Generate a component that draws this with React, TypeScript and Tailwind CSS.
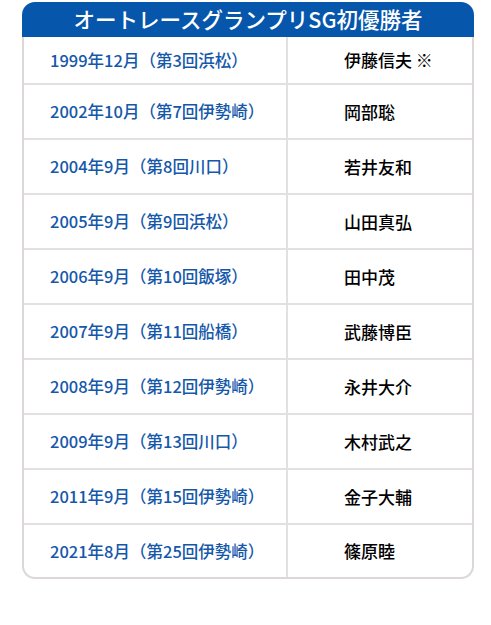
import React from 'react'

const rows = [
  { date: '1999年12月（第3回浜松）', name: '伊藤信夫 ※' },
  { date: '2002年10月（第7回伊勢崎）', name: '岡部聡' },
  { date: '2004年9月（第8回川口）', name: '若井友和' },
  { date: '2005年9月（第9回浜松）', name: '山田真弘' },
  { date: '2006年9月（第10回飯塚）', name: '田中茂' },
  { date: '2007年9月（第11回船橋）', name: '武藤博臣' },
  { date: '2008年9月（第12回伊勢崎）', name: '永井大介' },
  { date: '2009年9月（第13回川口）', name: '木村武之' },
  { date: '2011年9月（第15回伊勢崎）', name: '金子大輔' },
  { date: '2021年8月（第25回伊勢崎）', name: '篠原睦' },
]

const App: React.FC = () => {
  return (
    <div
      className="w-[491px] h-[625px] bg-white pt-[2px]"
      style={{ fontFamily: '"Noto Sans CJK JP", "Noto Sans", sans-serif' }}
    >
      <div className="ml-[22px] w-[452px]">
        <div className="h-[35px] bg-[#0656ab] rounded-t-[13px] flex items-center justify-center text-white text-[21.5px] font-medium">
          オートレースグランプリSG初優勝者
        </div>
        <div className="border-x-2 border-b-2 border-[#dcd8d8] rounded-b-[13px] overflow-hidden">
          {rows.map((row, i) => (
            <div
              key={row.date}
              className={`flex ${
                i === 0 ? 'h-[48px]' : i === rows.length - 1 ? 'h-[52px]' : 'h-[55px]'
              } ${i < rows.length - 1 ? 'border-b-2 border-[#e2e0e0]' : ''}`}
            >
              <div className="w-[262px] pl-[26px] flex items-center text-[16.5px] font-medium text-[#1558aa]">
                {row.date}
              </div>
              <div className="w-[2px] bg-[#e2e0e0]" />
              <div className="flex-1 pl-[56px] flex items-center text-[17px] font-medium text-black">
                {row.name}
              </div>
            </div>
          ))}
        </div>
      </div>
    </div>
  )
}

export default App
